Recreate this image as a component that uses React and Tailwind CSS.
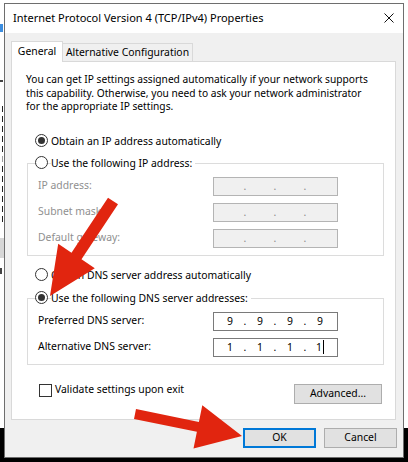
import React from "react";

function Radio({ checked }) {
    return (
        <span className="flex h-[13px] w-[13px] shrink-0 items-center justify-center rounded-full border border-[#333] bg-white">
            {checked && <span className="h-[7px] w-[7px] rounded-full bg-[#333]" />}
        </span>
    );
}

function RadioRow({ checked, label, className = "" }) {
    return (
        <div className={`flex h-[14px] items-center gap-[3px] ${className}`}>
            <Radio checked={checked} />
            <span className="whitespace-nowrap bg-white pr-[3px] leading-[14px]">{label}</span>
        </div>
    );
}

function IpField({ values, disabled, caret }) {
    const parts = values || ["", "", "", ""];
    return (
        <div
            className={`flex h-[19px] w-[125px] items-center border pl-[5px] leading-[14px] ${
                disabled ? "border-[#b4b4b4] bg-[#f0f0f0] text-[#8a8a8a]" : "border-[#7a7a7a] bg-white text-black"
            }`}
        >
            {parts.map((v, i) => (
                <React.Fragment key={i}>
                    <span className="flex w-[22px] items-center justify-center">
                        {v}
                        {caret && i === 3 && <span className="ml-[1px] inline-block h-[14px] w-px bg-black" />}
                    </span>
                    {i < 3 && <span className="w-[8px] text-center">.</span>}
                </React.Fragment>
            ))}
        </div>
    );
}

function FieldRow({ label, disabled, values, caret }) {
    return (
        <div className="flex h-[19px] items-center">
            <span className={`w-[175px] whitespace-nowrap ${disabled ? "text-[#8f8f8f]" : "text-black"}`}>{label}</span>
            <IpField values={values} disabled={disabled} caret={caret} />
        </div>
    );
}

function GroupBox({ header, children, className = "" }) {
    return (
        <div className={`flex w-[357px] flex-col border border-[#dcdcdc] pb-[7px] ${className}`}>
            <div className="-mt-[8px] ml-[7px] self-start">{header}</div>
            <div className="mt-[7px] flex flex-col gap-[7px] pl-[10px]">{children}</div>
        </div>
    );
}

function Arrows() {
    return (
        <svg className="pointer-events-none absolute left-0 top-0" width="408" height="462" viewBox="0 0 408 462">
            <polygon
                fill="#e1250f"
                points="118,204.3 81.5,259.3 94.8,268.2 50,296 58.2,243.8 71.5,252.7 108,197.7"
            />
            <polygon
                fill="#e1250f"
                points="136,409.1 198.9,422 202.3,405.3 242,436 193.5,448.5 196.9,431.8 134,418.9"
            />
        </svg>
    );
}

export default function App() {
    return (
        <div className="relative h-[462px] w-[408px] overflow-hidden font-['Noto_Sans',sans-serif] text-[10.4px] text-black">
            {/* desktop behind the dialog */}
            <div className="flex h-[428px] flex-col bg-white">
                <div className="h-[3px] overflow-hidden pl-[1px]">
                    <div className="-mt-[12px] whitespace-nowrap text-[11px] leading-[14px] text-[#222]">Internet Protocol Versi</div>
                </div>
                <div className="flex w-[4px] flex-col">
                    <div className="mt-[21px] h-[8px] w-[3px] bg-[#3d8ee0]" />
                    <div className="mt-[48px] h-[2px] w-[3px] bg-[#444]" />
                    <div className="mt-[24px] flex flex-col gap-[4px]">
                        {Array.from({ length: 12 }).map((_, i) => (
                            <div key={i} className={`h-[6px] w-[3px] border-r ${i === 5 ? "border-[#999]" : "border-[#222]"}`} />
                        ))}
                    </div>
                    <div className="mt-[16px] h-[20px] w-[4px] bg-[#d6d6d6]" />
                    <div className="mt-[10px] h-[6px] w-[2px] bg-[#444]" />
                </div>
            </div>
            <div className="h-[34px] bg-black" />

            {/* dialog window */}
            <div className="absolute left-[4px] top-[3px] flex h-[455px] w-[400px] flex-col border border-[#6e6e6e] bg-[#f0f0f0]">
                <div className="flex h-[29px] items-center justify-between bg-white pb-[1px] pl-[8px] pr-[9px]">
                    <span className="whitespace-nowrap text-[11px]">Internet Protocol Version 4 (TCP/IPv4) Properties</span>
                    <svg width="10" height="10" viewBox="0 0 10 10">
                        <path d="M0.5 0.5 L9.5 9.5 M9.5 0.5 L0.5 9.5" stroke="#111" strokeWidth="1" />
                    </svg>
                </div>

                <div className="mt-[8px] flex h-[20px] items-end pl-[6px]">
                    <div className="relative z-10 -mb-px flex h-[21px] w-[52px] items-center justify-center border border-b-0 border-[#d9d9d9] bg-white pb-[1px]">
                        General
                    </div>
                    <div className="flex h-[18px] w-[130px] items-center justify-center whitespace-nowrap border border-b-0 border-l-0 border-[#d9d9d9] bg-[#f0f0f0]">
                        Alternative Configuration
                    </div>
                </div>

                <div className="ml-[6px] flex h-[359px] w-[385px] flex-col border border-[#d9d9d9] bg-white">
                    <p className="ml-[14px] mt-[11px] whitespace-nowrap text-[10.2px] leading-[13.5px]">
                        You can get IP settings assigned automatically if your network supports
                        <br />
                        this capability. Otherwise, you need to ask your network administrator
                        <br />
                        for the appropriate IP settings.
                    </p>

                    <RadioRow checked label="Obtain an IP address automatically" className="ml-[23px] mt-[20px]" />

                    <GroupBox className="ml-[15px] mt-[15px]" header={<RadioRow label="Use the following IP address:" />}>
                        <FieldRow label="IP address:" disabled />
                        <FieldRow label="Subnet mask:" disabled />
                        <FieldRow label="Default gateway:" disabled />
                    </GroupBox>

                    <RadioRow label="Obtain DNS server address automatically" className="ml-[23px] mt-[12px]" />

                    <GroupBox
                        className="ml-[15px] mt-[16px]"
                        header={<RadioRow checked label="Use the following DNS server addresses:" />}
                    >
                        <FieldRow label="Preferred DNS server:" values={["9", "9", "9", "9"]} />
                        <FieldRow label="Alternative DNS server:" values={["1", "1", "1", "1"]} caret />
                    </GroupBox>

                    <div className="mt-[19px] flex items-start justify-between pl-[27px] pr-[13px]">
                        <div className="flex h-[13px] items-center gap-[3px]">
                            <span className="h-[13px] w-[13px] border border-[#333] bg-white" />
                            <span className="whitespace-nowrap">Validate settings upon exit</span>
                        </div>
                        <button className="flex h-[20px] w-[88px] items-center justify-center border border-[#adadad] bg-[#e1e1e1]">
                            Advanced...
                        </button>
                    </div>
                </div>

                <div className="mt-[8px] flex justify-end gap-[8px] pr-[6px]">
                    <button className="flex h-[20px] w-[73px] items-center justify-center border-2 border-[#0078d7] bg-[#e1e1e1]">
                        OK
                    </button>
                    <button className="flex h-[20px] w-[73px] items-center justify-center border border-[#adadad] bg-[#e1e1e1]">
                        Cancel
                    </button>
                </div>
            </div>

            <Arrows />
        </div>
    );
}
